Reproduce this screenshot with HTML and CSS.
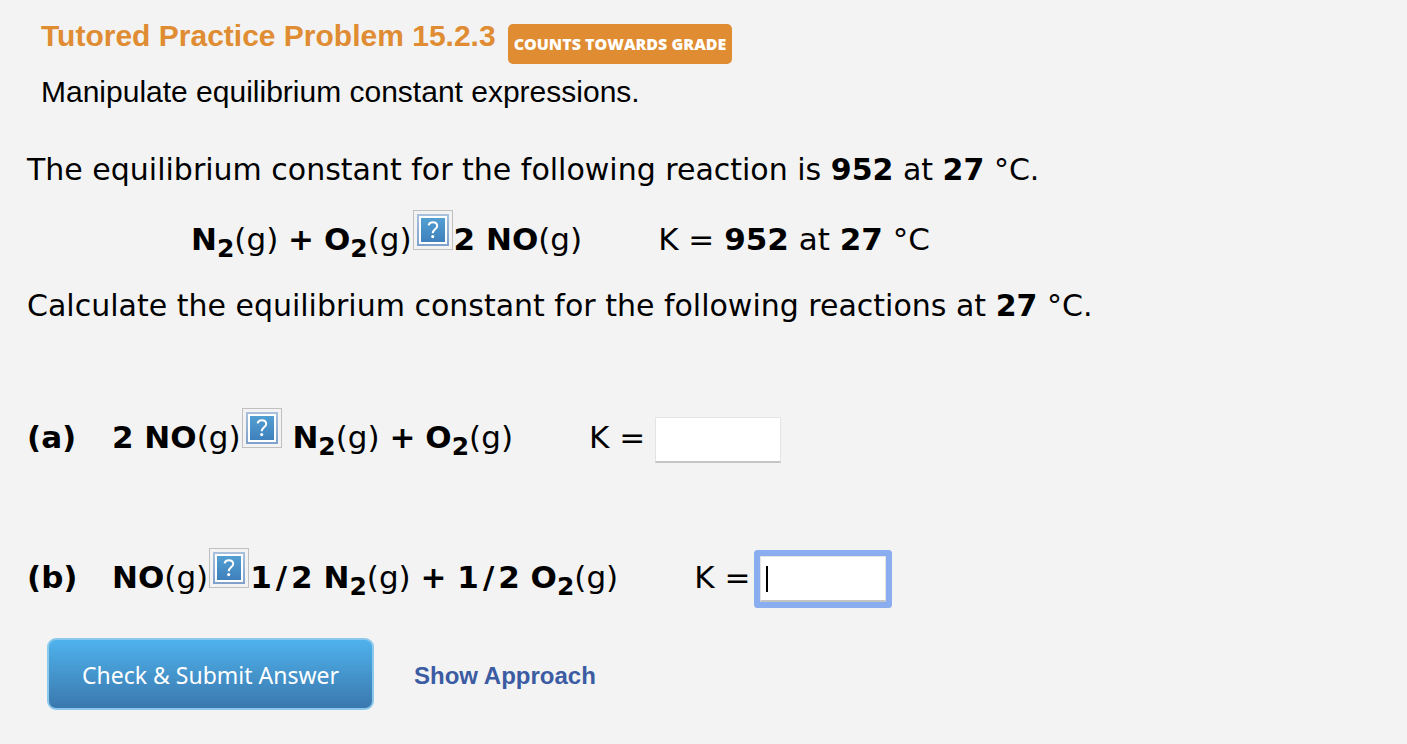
FILE: index.html
```html
<!DOCTYPE html>
<html lang="en">
<head>
    <meta charset="UTF-8">
    <meta name="viewport" content="width=device-width, initial-scale=1.0">
    <title>Tutored Practice Problem 15.2.3</title>
    <link rel="stylesheet" href="styles.css">
</head>
<body>
    <header class="header">
        <div class="title-row">
            <h1 class="title">Tutored Practice Problem 15.2.3</h1>
            <span class="badge">COUNTS TOWARDS GRADE</span>
        </div>
        <p class="subtitle">Manipulate equilibrium constant expressions.</p>
    </header>

    <form class="problem">
        <p class="text">The equilibrium constant for the following reaction is <b>952</b> at <b>27</b> °C.</p>

        <div class="row given">
            <span><b>N<sub>2</sub></b>(g) <b>+</b> <b>O<sub>2</sub></b>(g)<svg class="missing" viewBox="0 0 40 40" role="img" aria-label="reaction arrow"><use href="#missing-icon"/></svg><b>2 NO</b>(g)</span>
            <span>K = <b>952</b> at <b>27</b> °C</span>
        </div>

        <p class="text">Calculate the equilibrium constant for the following reactions at <b>27</b> °C.</p>

        <div class="row part">
            <b class="part-name">(a)</b>
            <span class="formula"><b>2 NO</b>(g)<svg class="missing" viewBox="0 0 40 40" role="img" aria-label="reaction arrow"><use href="#missing-icon"/></svg> <b>N<sub>2</sub></b>(g) <b>+</b> <b>O<sub>2</sub></b>(g)</span>
            <label for="answer-a">K =</label>
            <input class="answer" id="answer-a" type="text">
        </div>

        <div class="row part">
            <b class="part-name">(b)</b>
            <span class="formula"><b>NO</b>(g)<svg class="missing" viewBox="0 0 40 40" role="img" aria-label="reaction arrow"><use href="#missing-icon"/></svg><b>1<span class="slash">/</span>2 N<sub>2</sub></b>(g) <b>+ 1<span class="slash">/</span>2 O<sub>2</sub></b>(g)</span>
            <label for="answer-b">K =</label>
            <input class="answer active" id="answer-b" type="text">
        </div>

        <div class="actions">
            <button class="submit" type="button">Check &amp; Submit Answer</button>
            <a class="approach" href="#">Show Approach</a>
        </div>
    </form>

    <svg class="defs" width="0" height="0" aria-hidden="true">
        <defs>
            <linearGradient id="frame" x1="0" y1="0" x2="0" y2="1">
                <stop offset="0" stop-color="#a9c1dc"/>
                <stop offset="1" stop-color="#7fa0cc"/>
            </linearGradient>
            <linearGradient id="fill" x1="0" y1="0" x2="0" y2="1">
                <stop offset="0" stop-color="#529fd2"/>
                <stop offset="1" stop-color="#3f80bc"/>
            </linearGradient>
            <symbol id="missing-icon" viewBox="0 0 40 40">
                <rect x="0.5" y="0.5" width="39" height="39" fill="none" stroke="#c0c0c0"/>
                <rect x="4" y="4" width="32" height="32" fill="url(#frame)"/>
                <rect x="6" y="6" width="28" height="28" fill="#fff"/>
                <rect x="8" y="8" width="24" height="24" fill="url(#fill)"/>
                <path d="M15.6 15.4C16 13.3 17.6 12.2 19.8 12.2C22.5 12.2 24.2 13.7 24.2 15.9C24.2 19.2 19.7 19.4 19.7 23.2" fill="none" stroke="#fff" stroke-width="2"/>
                <circle cx="19.7" cy="26.6" r="1.6" fill="#fff"/>
            </symbol>
        </defs>
    </svg>
</body>
</html>
```
FILE: styles.css
```css
body{
    margin: 0;
    background-color: #f3f3f3;
    color: #000;
    font-family: "DejaVu Sans", Verdana, sans-serif;
    font-size: 30px;
    line-height: 40px;
}
.header{
    padding: 16px 41px 0;
    font-family: "Liberation Sans", Arial, sans-serif;
}
.title-row{
    display: flex;
    align-items: flex-start;
    gap: 12px;
}
.title{
    margin: 0;
    color: #df8c32;
    font-size: 30px;
    line-height: 40px;
}
.badge{
    margin-top: 8px;
    padding: 0 6px;
    border-radius: 5px;
    background-color: #df8c32;
    color: #fff;
    font-family: "Open Sans", sans-serif;
    font-size: 16px;
    font-weight: 800;
    line-height: 40px;
}
.subtitle{
    margin: 8px 0 0;
}
.problem{
    padding: 0 27px;
}
.text{
    margin: 38px 0 0;
}
.row{
    display: flex;
    align-items: baseline;
    font-size: 31px;
}
sub{
    font-size: 25px;
    line-height: 0;
    vertical-align: -7px;
}
.missing{
    width: 40px;
    height: 40px;
    margin: 0 1px;
    vertical-align: baseline;
}
.slash{
    margin: 0 4px;
}
.given{
    gap: 76px;
    margin-top: 20px;
    padding-left: 164px;
}
.given + .text{
    margin-top: 27px;
}
.part{
    margin-top: 82px;
    padding-bottom: 3px;
}
.part-name{
    width: 85px;
}
.formula{
    margin-right: 76px;
}
.answer{
    box-sizing: border-box;
    width: 126px;
    height: 46px;
    margin-left: 10px;
    padding: 0 6px;
    border: 1px solid #e4e4e4;
    border-bottom: 2px solid #c4c4c4;
    background-color: #fff;
    font-family: inherit;
    font-size: 26px;
    outline: none;
}
.active{
    border-radius: 1px;
    box-shadow: 0 0 0 6px #8aadef;
    /* text cursor */
    background-image: linear-gradient(#000, #000);
    background-repeat: no-repeat;
    background-size: 2px 26px;
    background-position: 5px center;
}
.actions{
    display: flex;
    align-items: center;
    gap: 40px;
    margin-top: 33px;
    padding-left: 20px;
}
.submit{
    height: 72px;
    padding: 2px 33px 0;
    border: 2px solid #8cc8ec;
    border-radius: 9px;
    background: linear-gradient(#4fb2ec, #3a78ae);
    color: #fff;
    font-family: "Noto Sans", sans-serif;
    font-size: 23px;
}
.approach{
    padding-top: 4px;
    color: #3b5ca3;
    font-family: "Liberation Sans", Arial, sans-serif;
    font-size: 24px;
    font-weight: bold;
    text-decoration: none;
}
.defs{
    display: block;
}
```
